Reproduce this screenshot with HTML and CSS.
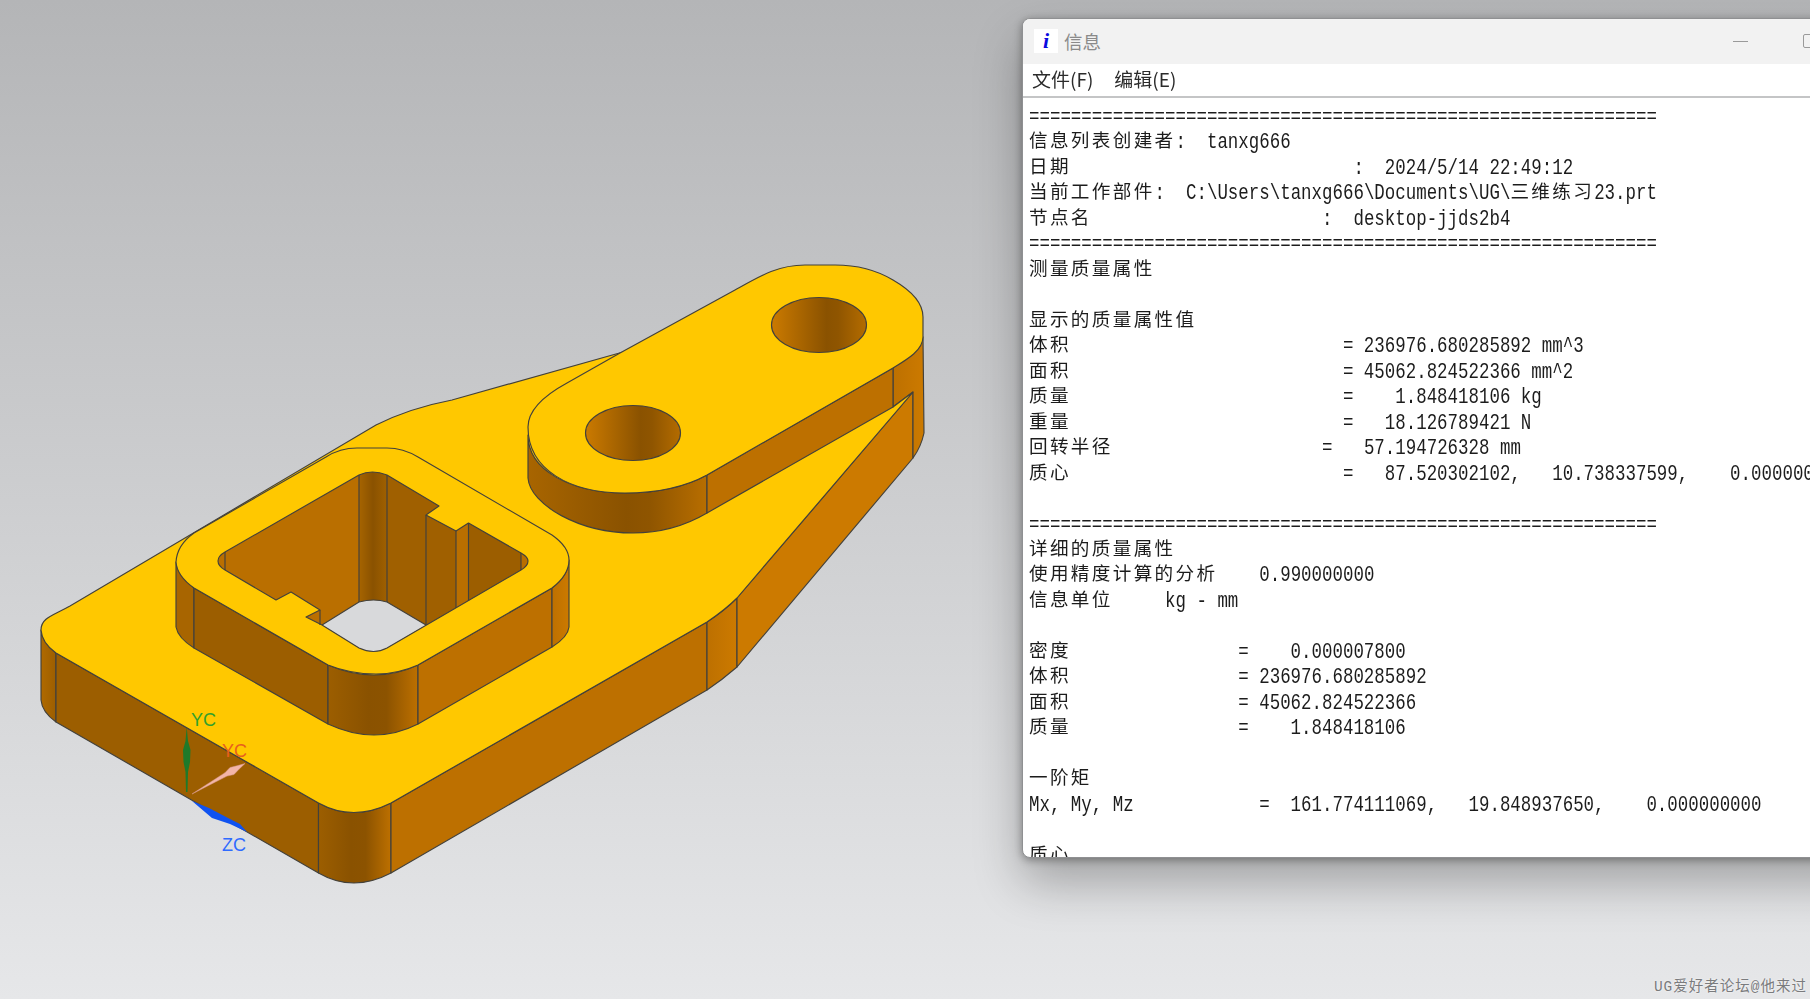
FILE: index.html
```html
<!DOCTYPE html>
<html lang="zh-CN">
<head>
<meta charset="utf-8">
<title>信息</title>
<link rel="stylesheet" href="styles.css">
</head>
<body>
<main class="desktop">
  <svg class="model" width="1810" height="999" viewBox="0 0 1810 999" xmlns="http://www.w3.org/2000/svg" aria-label="三维模型">
    <defs>
      <linearGradient id="cornerA" x1="0" x2="1" y1="0" y2="0">
        <stop offset="0" stop-color="#9c5e00"/><stop offset=".45" stop-color="#8a5200"/><stop offset=".65" stop-color="#8c5300"/><stop offset="1" stop-color="#bd7000"/>
      </linearGradient>
      <linearGradient id="cornerB" x1="0" x2="1" y1="0" y2="0">
        <stop offset="0" stop-color="#bd7000"/><stop offset="1" stop-color="#cc7a00"/>
      </linearGradient>
      <linearGradient id="cornerC" x1="0" x2="1" y1="0" y2="0">
        <stop offset="0" stop-color="#b06a00"/><stop offset="1" stop-color="#9c5e00"/>
      </linearGradient>
      <linearGradient id="lobeWall" x1="0" x2="1" y1="0" y2="0">
        <stop offset="0" stop-color="#a86500"/><stop offset=".55" stop-color="#8a5200"/><stop offset=".68" stop-color="#8f5500"/><stop offset="1" stop-color="#b86e00"/>
      </linearGradient>
      <linearGradient id="hole" x1="0" x2="1" y1="0" y2="0">
        <stop offset="0" stop-color="#cb7a00"/><stop offset=".58" stop-color="#8a5200"/><stop offset=".7" stop-color="#8f5500"/><stop offset="1" stop-color="#b46c00"/>
      </linearGradient>
      <linearGradient id="innerCorner" x1="0" x2="1" y1="0" y2="0">
        <stop offset="0" stop-color="#a66400"/><stop offset=".5" stop-color="#8a5200"/><stop offset="1" stop-color="#a06000"/>
      </linearGradient>
      <clipPath id="opening">
        <path d="M218 561Q218 556 225 552L359 475Q372 469 387 475L439 506L426 515L456 531L468.5 523L521 553Q528 557 528 561Q528 566 521 570L387 648Q374 655 359 648L322 625L306 617L320 610L291 592L276 600L225 570Q218 566 218 561Z"/>
      </clipPath>
    </defs>

    <!-- base walls -->
    <path class="edge" fill="url(#cornerC)" d="M41 630L41 700Q42 712 56 722L56 653Q42 643 41 630Z"/>
    <path class="edge wall-dark" d="M56 653L318.5 803L318.5 873L56 722Z"/>
    <path class="edge" fill="url(#cornerA)" d="M318.5 803Q353 822 391 803L391 873Q353 893 318.5 873Z"/>
    <path class="edge wall-mid" d="M391 803L707 622L707 690L391 873Z"/>
    <path class="edge" fill="url(#cornerB)" d="M707 622Q725 610 737 598L737 667Q722 680 707 690Z"/>
    <path class="edge wall-light" d="M737 598L913 392L913 458L737 667Z"/>
    <path class="edge" fill="url(#cornerB)" d="M893 407L893 368L923 337L924 433Q921 447 913 458L913 392Z"/>

    <!-- base top face -->
    <path class="edge top" d="M41 630C41 618 52 616 70 606L376 425Q410 408 452 400L623 352L800 320L893 407L913 392L737 598Q725 610 707 622L391 803Q353 822 318.5 803L56 653Q42 643 41 630Z"/>

    <!-- upper lobe -->
    <path class="edge" fill="url(#lobeWall)" d="M528 435L528 478C530 505 580 533 633 533C665 533 690 523 707 513L707 475C685 487 655 493 625 493C570 493 528 470 528 435Z"/>
    <path class="edge wall-mid" d="M707 475L893 368L893 407L707 513Z"/>
    <path class="edge top" d="M528 427C528 410 545 395 567 383L620 353L735 290C760 276 778 265 805 265L835 265C858 265 878 271 893 280C912 291 923 303 923 317L923 337C923 350 908 359 893 368L707 475C685 487 655 493 625 493C570 493 528 470 528 427Z"/>
    <ellipse class="edge" fill="url(#hole)" cx="633" cy="433" rx="47.5" ry="27.5"/>
    <ellipse class="edge" fill="url(#hole)" cx="819" cy="325" rx="47.5" ry="27.5"/>

    <!-- square boss walls -->
    <path class="edge wall-corner" d="M176 562L176 627Q178 638 194 648L194 588Q178 576 176 562Z"/>
    <path class="edge wall-dark" d="M194 588L328 665L328 724L194 648Z"/>
    <path class="edge" fill="url(#cornerA)" d="M328 665Q375 685 418 665L418 724Q375 746 328 724Z"/>
    <path class="edge wall-mid" d="M418 665L552 588L552 647L418 724Z"/>
    <path class="edge" fill="url(#cornerB)" d="M552 588Q568 576 569 560L569 627Q568 637 552 647Z"/>

    <!-- square boss top -->
    <path class="edge top" d="M176 562Q177 545 194 533L326 457Q340 448 357 448L387 448Q403 448 418 457L552 535Q569 547 569 560Q569 575 552 588L418 665Q398 674 376 674Q350 674 328 665L194 588Q177 576 176 562Z"/>

    <!-- square opening -->
    <g clip-path="url(#opening)">
      <rect class="wall-left" x="215" y="465" width="144" height="195"/>
      <rect x="359" y="465" width="28" height="195" fill="url(#innerCorner)"/>
      <rect class="wall-inner" x="387" y="465" width="69" height="195"/>
      <rect class="wall-left" x="456" y="465" width="12.5" height="195"/>
      <rect class="wall-dark" x="468.5" y="465" width="52.5" height="195"/>
      <rect class="wall-left" x="521" y="465" width="10" height="195"/>
      <path class="seethrough" d="M359 602Q374 598 387 602L426 625L387 648Q374 655 359 648L322 625Z"/>
    </g>
    <path class="outline" d="M218 561Q218 556 225 552L359 475Q372 469 387 475L439 506L426 515L456 531L468.5 523L521 553Q528 557 528 561Q528 566 521 570L387 648Q374 655 359 648L322 625L306 617L320 610L291 592L276 600L225 570Q218 566 218 561Z"/>
    <path class="outline" d="M322 625L359 602Q374 598 387 602L426 625"/>
    <path class="outline" d="M225 552V570M359 475V602M387 475V602M426 515V625M456 531V608M468.5 523V601M521 553V570M320 610V625"/>

    <!-- coordinate triad -->
    <path class="axis-y" d="M186.7 727L188 741L190.5 750L190 762L188 772L187.5 792L186 792L185.5 772L183.5 762L183 750L185.5 741Z"/>
    <path class="axis-x" d="M192 794L209.5 782.7L225 772.7L230 767.5L237 765.8L245 763.5L239 769.2L234 774.5L227 776.1L210.5 784.5Z"/>
    <path class="axis-z" d="M192 801L209 808L228 818L240 824L247 832L230 824L212 818Z"/>
    <text class="triad yc" x="191" y="726">YC</text>
    <text class="triad xc" x="222" y="757">YC</text>
    <text class="triad zc" x="222" y="851">ZC</text>
  </svg>

  <section class="window">
    <header class="titlebar">
      <span class="app-icon">i</span>
      <span class="title">信息</span>
      <span class="min-btn"></span>
      <span class="max-btn"></span>
    </header>
    <nav class="menubar">
      <span class="menu-item">文件(F)</span>
      <span class="menu-item">编辑(E)</span>
    </nav>
    <div class="output">
      <div class="ln"><span class="l">============================================================</span></div>
      <div class="ln"><span class="c">信息列表创建者</span><span class="l">:  tanxg666</span></div>
      <div class="ln"><span class="c">日期</span><span class="l">                           :  2024/5/14 22:49:12</span></div>
      <div class="ln"><span class="c">当前工作部件</span><span class="l">:  C:\Users\tanxg666\Documents\UG\</span><span class="c">三维练习</span><span class="l">23.prt</span></div>
      <div class="ln"><span class="c">节点名</span><span class="l">                      :  desktop-jjds2b4</span></div>
      <div class="ln"><span class="l">============================================================</span></div>
      <div class="ln"><span class="c">测量质量属性</span></div>
      <div class="ln"></div>
      <div class="ln"><span class="c">显示的质量属性值</span></div>
      <div class="ln"><span class="c">体积</span><span class="l">                          = 236976.680285892 mm^3</span></div>
      <div class="ln"><span class="c">面积</span><span class="l">                          = 45062.824522366 mm^2</span></div>
      <div class="ln"><span class="c">质量</span><span class="l">                          =    1.848418106 kg</span></div>
      <div class="ln"><span class="c">重量</span><span class="l">                          =   18.126789421 N</span></div>
      <div class="ln"><span class="c">回转半径</span><span class="l">                    =   57.194726328 mm</span></div>
      <div class="ln"><span class="c">质心</span><span class="l">                          =   87.520302102,   10.738337599,    0.000000000</span></div>
      <div class="ln"></div>
      <div class="ln"><span class="l">============================================================</span></div>
      <div class="ln"><span class="c">详细的质量属性</span></div>
      <div class="ln"><span class="c">使用精度计算的分析</span><span class="l">    0.990000000</span></div>
      <div class="ln"><span class="c">信息单位</span><span class="l">     kg - mm</span></div>
      <div class="ln"></div>
      <div class="ln"><span class="c">密度</span><span class="l">                =    0.000007800</span></div>
      <div class="ln"><span class="c">体积</span><span class="l">                = 236976.680285892</span></div>
      <div class="ln"><span class="c">面积</span><span class="l">                = 45062.824522366</span></div>
      <div class="ln"><span class="c">质量</span><span class="l">                =    1.848418106</span></div>
      <div class="ln"></div>
      <div class="ln"><span class="c">一阶矩</span></div>
      <div class="ln"><span class="l">Mx, My, Mz            =  161.774111069,   19.848937650,    0.000000000</span></div>
      <div class="ln"></div>
      <div class="ln"><span class="c">质心</span></div>
    </div>
  </section>

  <div class="watermark">UG爱好者论坛@他来过</div>
</main>
</body>
</html>
```
FILE: styles.css
```css
* { box-sizing: border-box; }

html, body {
  margin: 0;
  width: 1810px;
  height: 999px;
  overflow: hidden;
}

.desktop {
  position: relative;
  width: 1810px;
  height: 999px;
  overflow: hidden;
  background: linear-gradient(180deg, #b4b5b7 0%, #e6e7e9 100%);
  font-family: "Liberation Mono", "Noto Sans CJK SC", monospace;
}

/* 3D model */
.model { position: absolute; left: 0; top: 0; display: block; }
.edge { stroke: #43413b; stroke-width: 1.15; stroke-linejoin: round; }
.outline { fill: none; stroke: #43413b; stroke-width: 1.15; stroke-linejoin: round; }
.top { fill: #ffc800; }
.wall-dark { fill: #9c5e00; }
.wall-mid { fill: #bd7000; }
.wall-light { fill: #cc7a00; }
.wall-corner { fill: #a86500; }
.wall-left { fill: #ba6f00; }
.wall-inner { fill: #a06000; }
.seethrough { fill: #d8d9db; }

.axis-y { fill: #1e7a2a; }
.axis-x { fill: #f3b5a8; stroke: #d99a90; stroke-width: .5; }
.axis-z { fill: #0f52f0; }
.triad { font-family: "Liberation Sans", sans-serif; font-size: 18px; }
.yc { fill: #32a02c; }
.xc { fill: #e8601e; }
.zc { fill: #2f6bff; }

/* information window */
.window {
  position: absolute;
  left: 1022px;
  top: 18px;
  width: 900px;
  height: 840px;
  display: flex;
  flex-direction: column;
  background: #fff;
  border: 1px solid #8f9092;
  border-radius: 8px 0 0 8px;
  box-shadow: 0 24px 48px rgba(0, 0, 0, .28), 0 2px 8px rgba(0, 0, 0, .35);
  overflow: hidden;
}

.titlebar {
  flex: 0 0 45px;
  display: flex;
  align-items: center;
  padding: 0 0 1px 11px;
  background: #f2f2f2;
}

.app-icon {
  width: 24px;
  height: 24px;
  background: #fff;
  color: #0a0adf;
  font: italic bold 22px/24px "Liberation Serif", serif;
  text-align: center;
}

.title {
  margin-left: 6px;
  font: 18.5px/24px "Noto Sans CJK SC", sans-serif;
  color: #8a8a8a;
}

.min-btn {
  width: 15px;
  height: 1px;
  margin-left: 632px;
  background: #9a9a9a;
}

.max-btn {
  width: 14px;
  height: 14px;
  margin-left: 55px;
  border: 1px solid #9a9a9a;
  border-radius: 2px;
}

.menubar {
  flex: 0 0 34px;
  display: flex;
  align-items: center;
  gap: 21px;
  padding-left: 9px;
  padding-bottom: 2px;
  background: #fff;
  border-bottom: 2px solid #c4c5c6;
}

.menu-item {
  font: 19px/24px "Noto Sans CJK SC", sans-serif;
  color: #2b2b2b;
  filter: blur(.3px);
}

.output {
  flex: 1;
  min-height: 0;
  overflow: hidden;
  padding: 7px 0 0 6px;
  color: #1c1c1c;
  font-size: 17.45px;
  filter: blur(.35px);
}

.ln {
  height: 25.47px;
  line-height: 25.47px;
  white-space: pre;
}

.l {
  display: inline-block;
  line-height: 1.1;
  transform: scaleY(1.28);
}

.c {
  display: inline-block;
  font-family: "Noto Sans CJK SC", sans-serif;
  font-size: 18.6px;
  line-height: 1;
  letter-spacing: 2.34px;
}

.watermark {
  position: absolute;
  right: 3px;
  bottom: 3px;
  font-size: 14.5px;
  line-height: 18px;
  letter-spacing: 1px;
  color: #7a7b7d;
  text-shadow: 0 0 2px #fff;
  white-space: nowrap;
}
```
